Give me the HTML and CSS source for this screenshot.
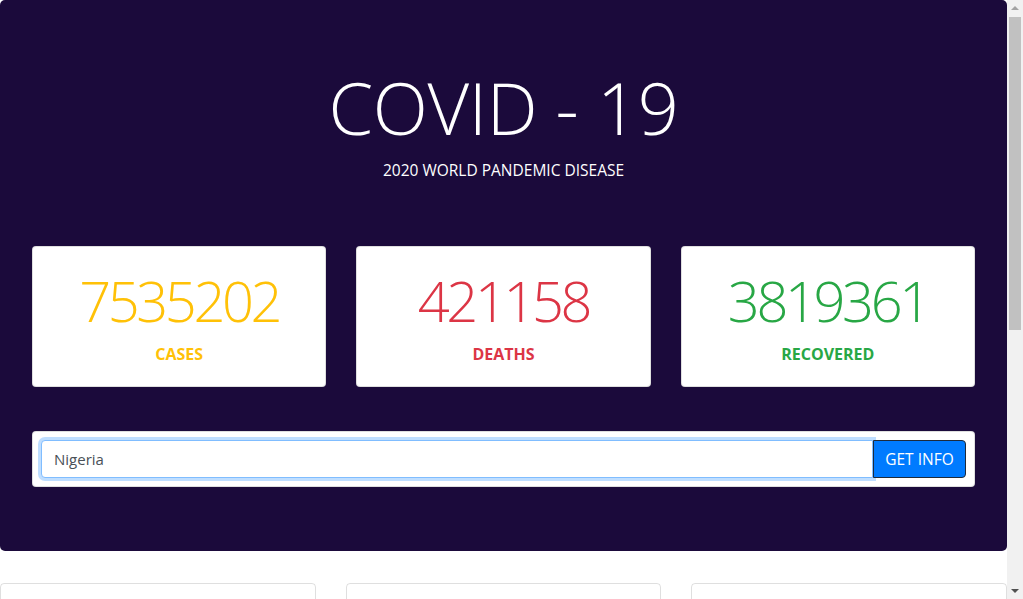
FILE: index.html
```html
<!DOCTYPE html>
<html lang="en">
<head>
<meta charset="utf-8">
<title>COVID - 19</title>
<link rel="stylesheet" href="styles.css">
</head>
<body>
<div class="page">
  <header class="jumbotron">
    <h1 class="title">COVID - 19</h1>
    <p class="subtitle">2020 WORLD PANDEMIC DISEASE</p>
    <div class="stats">
      <div class="stat-card">
        <div class="stat-number yellow">7535202</div>
        <div class="stat-label yellow">CASES</div>
      </div>
      <div class="stat-card">
        <div class="stat-number red">421158</div>
        <div class="stat-label red">DEATHS</div>
      </div>
      <div class="stat-card">
        <div class="stat-number green">3819361</div>
        <div class="stat-label green">RECOVERED</div>
      </div>
    </div>
    <div class="search-card">
      <div class="input-group">
        <input class="search-input" type="text" value="Nigeria" autofocus>
        <button class="search-btn" type="button">GET INFO</button>
      </div>
    </div>
  </header>
  <div class="lower">
    <div class="lower-card"></div>
    <div class="lower-card"></div>
    <div class="lower-card"></div>
  </div>
</div>
<div class="scrollbar">
  <div class="sb-arrow sb-up"></div>
  <div class="sb-thumb"></div>
  <div class="sb-arrow sb-down"></div>
</div>
</body>
</html>
```
FILE: styles.css
```css
html, body {
  margin: 0;
  padding: 0;
  overflow: hidden;
  background: #fff;
}
body {
  font-family: "Open Sans", "Noto Sans", sans-serif;
  font-size: 16px;
  line-height: 1.5;
  color: #212529;
}
.page {
  width: 1007px;
}
.jumbotron {
  background: #1b0a3b;
  border-radius: 5px;
  padding: 64px 32px;
  margin-bottom: 32px;
  text-align: center;
}
.title {
  margin: 0 0 8px;
  font-size: 72px;
  font-weight: 300;
  line-height: 1.2;
  color: #fff;
  letter-spacing: -0.3px;
}
.subtitle {
  margin: 0 0 64px;
  color: #fff;
  font-size: 15.5px;
  line-height: 24px;
}
.stats {
  display: grid;
  grid-template-columns: repeat(3, 1fr);
  gap: 30px;
  margin-bottom: 44px;
}
.stat-card {
  background: #fff;
  border: 1px solid rgba(0,0,0,.125);
  border-radius: 4px;
  padding: 20px;
}
.stat-number {
  font-size: 56px;
  font-weight: 300;
  line-height: 1.2;
  letter-spacing: -3.4px;
  margin-bottom: 7px;
}
.stat-label {
  font-size: 16px;
  font-weight: 700;
  line-height: 24px;
}
.yellow { color: #ffc107; }
.red { color: #dc3545; }
.green { color: #28a745; }
.search-card {
  background: #fff;
  border: 1px solid rgba(0,0,0,.125);
  border-radius: 4px;
  padding: 8px;
}
.input-group {
  display: flex;
}
.search-input {
  flex: 1;
  height: 38px;
  box-sizing: border-box;
  border: 1px solid #80bdff;
  border-radius: 4px 0 0 4px;
  box-shadow: 0 0 0 3px rgba(0,123,255,.25);
  padding: 6px 12px;
  font-family: "Open Sans", "Noto Sans", sans-serif;
  font-size: 15px;
  color: #495057;
  outline: none;
  background: #fff;
}
.search-btn {
  height: 38px;
  width: 93px;
  box-sizing: border-box;
  background: #007bff;
  border: 1px solid #1e2a3a;
  border-radius: 0 4px 4px 0;
  color: #fff;
  font-family: "Open Sans", "Noto Sans", sans-serif;
  font-size: 15.5px;
  padding: 6px 8px;
}
.lower {
  display: grid;
  grid-template-columns: repeat(3, 1fr);
  gap: 30px;
}
.lower-card {
  height: 200px;
  border: 1px solid rgba(0,0,0,.125);
  border-radius: 4px;
}
.scrollbar {
  position: fixed;
  top: 0;
  right: 0;
  width: 16px;
  height: 100%;
  background: #f1f1f1;
}
.sb-thumb {
  position: absolute;
  left: 2px;
  right: 2px;
  top: 17px;
  height: 313px;
  background: #c1c1c1;
}
.sb-arrow {
  position: absolute;
  left: 4px;
  width: 0;
  height: 0;
  border-left: 4px solid transparent;
  border-right: 4px solid transparent;
}
.sb-up {
  top: 6px;
  border-bottom: 4px solid #a3a3a3;
}
.sb-down {
  bottom: 6px;
  border-top: 4px solid #505050;
}
```
